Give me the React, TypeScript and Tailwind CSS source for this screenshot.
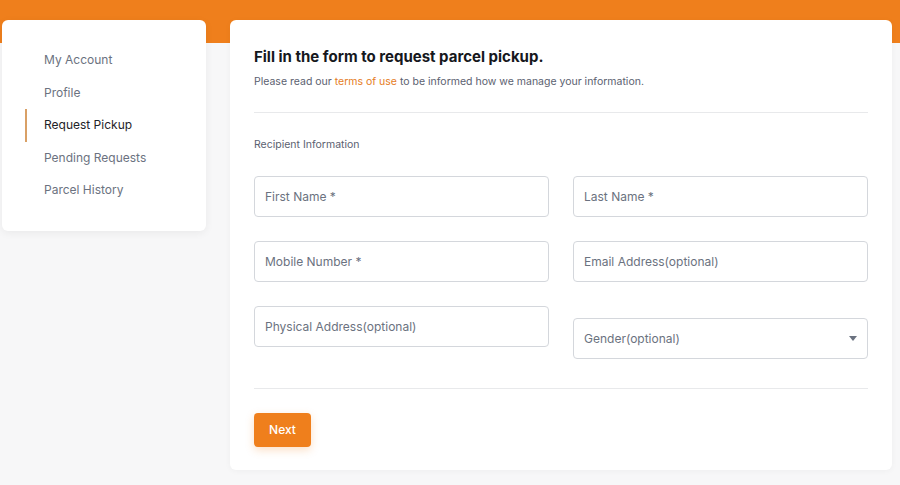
import { useState } from "react"

const NAV_ITEMS = ["My Account", "Profile", "Request Pickup", "Pending Requests", "Parcel History"]

function Field({ placeholder }: { placeholder: string }) {
  return (
    <input
      placeholder={placeholder}
      className="h-[41px] w-full rounded border border-[#d4d7dc] bg-white px-[10px] text-[12px] text-[#374151] outline-none placeholder:text-[#6b7280]"
    />
  )
}

export default function App() {
  const [active] = useState("Request Pickup")

  return (
    <div className="min-h-[485px] bg-[linear-gradient(#ef7f1c_0_43px,#f7f7f8_43px)] font-['Inter',sans-serif]">
      <div className="flex items-start gap-6 pl-[2px] pr-2 pt-5">
        <aside className="w-[204px] shrink-0 rounded-md bg-white pb-6 pt-6 shadow-[0_2px_8px_rgba(0,0,0,0.06)]">
          <nav className="flex flex-col">
            {NAV_ITEMS.map((item) => (
              <div key={item} className="flex h-[32.5px] items-center">
                <span
                  className={
                    item === active ? "ml-[23px] h-full w-[2px] bg-[#d9a066]" : "ml-[23px] h-full w-[2px]"
                  }
                />
                <span
                  className={
                    item === active
                      ? "ml-[17px] text-[12px] text-[#1f2328]"
                      : "ml-[17px] text-[12px] text-[#6b7280]"
                  }
                >
                  {item}
                </span>
              </div>
            ))}
          </nav>
        </aside>

        <main className="w-[662px] rounded-md bg-white px-6 pb-[23px] pt-[25px] shadow-[0_1px_6px_rgba(0,0,0,0.04)]">
          <h1 className="text-[15px] font-bold leading-6 text-[#16181d]">
            Fill in the form to request parcel pickup.
          </h1>
          <p className="mt-[5px] text-[10.5px] leading-4 text-[#5b6170]">
            Please read our <span className="text-[#e57c1e]">terms of use</span> to be informed how we manage your
            information.
          </p>

          <div className="mt-[22px] h-px bg-[#e8e9eb]" />

          <p className="mt-6 text-[10.5px] leading-4 text-[#5b6170]">Recipient Information</p>

          <div className="mt-[23px] grid grid-cols-2 items-start gap-x-6 gap-y-6">
            <Field placeholder="First Name *" />
            <Field placeholder="Last Name *" />
            <Field placeholder="Mobile Number *" />
            <Field placeholder="Email Address(optional)" />
            <Field placeholder="Physical Address(optional)" />
            <div className="relative mt-3">
              <div className="flex h-[41px] w-full items-center rounded border border-[#d4d7dc] bg-white px-[10px] text-[12px] text-[#6b7280]">
                Gender(optional)
              </div>
              <svg className="absolute right-[11px] top-[18px]" width="8" height="5" viewBox="0 0 8 5">
                <path d="M0 0h8L4 5z" fill="#6b7280" />
              </svg>
            </div>
          </div>

          <div className="mt-[29px] h-px bg-[#e8e9eb]" />

          <button className="mt-6 h-[34px] w-[57px] rounded bg-[#ef7f1c] text-[12px] font-medium text-white shadow-[0_3px_8px_rgba(239,127,28,0.25)]">
            Next
          </button>
        </main>
      </div>
    </div>
  )
}
